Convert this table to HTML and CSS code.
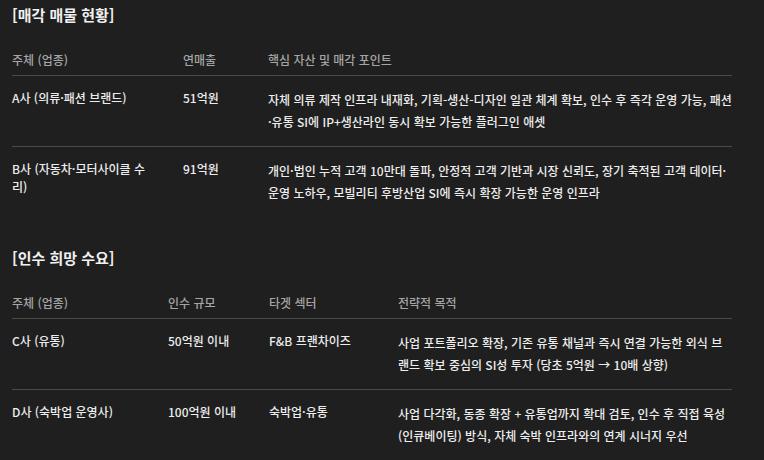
FILE: index.html
```html
<!DOCTYPE html>
<html lang="ko">
<head>
<meta charset="utf-8">
<link rel="stylesheet" href="styles.css">
</head>
<body>
<section class="section">
  <h2 class="title">[매각 매물 현황]</h2>
  <div class="table sell">
    <div class="row head">
      <div class="cell">주체 (업종)</div>
      <div class="cell">연매출</div>
      <div class="cell wide">핵심 자산 및 매각 포인트</div>
    </div>
    <div class="row">
      <div class="cell">A사 (의류·패션 브랜드)</div>
      <div class="cell">51억원</div>
      <div class="cell wide">자체 의류 제작 인프라 내재화, 기획-생산-디자인 일관 체계 확보, 인수 후 즉각 운영 가능, 패션·유통 SI에 IP+생산라인 동시 확보 가능한 플러그인 애셋</div>
    </div>
    <div class="row last">
      <div class="cell">B사 (자동차·모터사이클 수리)</div>
      <div class="cell">91억원</div>
      <div class="cell wide">개인·법인 누적 고객 10만대 돌파, 안정적 고객 기반과 시장 신뢰도, 장기 축적된 고객 데이터·운영 노하우, 모빌리티 후방산업 SI에 즉시 확장 가능한 운영 인프라</div>
    </div>
  </div>
</section>
<section class="section second">
  <h2 class="title">[인수 희망 수요]</h2>
  <div class="table buy">
    <div class="row head">
      <div class="cell">주체 (업종)</div>
      <div class="cell">인수 규모</div>
      <div class="cell">타겟 섹터</div>
      <div class="cell wide">전략적 목적</div>
    </div>
    <div class="row">
      <div class="cell">C사 (유통)</div>
      <div class="cell">50억원 이내</div>
      <div class="cell">F&amp;B 프랜차이즈</div>
      <div class="cell wide">사업 포트폴리오 확장, 기존 유통 채널과 즉시 연결 가능한 외식 브랜드 확보 중심의 SI성 투자 (당초 5억원 → 10배 상향)</div>
    </div>
    <div class="row last">
      <div class="cell">D사 (숙박업 운영사)</div>
      <div class="cell">100억원 이내</div>
      <div class="cell">숙박업·유통</div>
      <div class="cell wide">사업 다각화, 동종 확장 + 유통업까지 확대 검토, 인수 후 직접 육성 (인큐베이팅) 방식, 자체 숙박 인프라와의 연계 시너지 우선</div>
    </div>
  </div>
</section>
</body>
</html>
```

FILE: styles.css
```css
html, body {
  margin: 0;
  padding: 0;
  background: #1f1f1f;
}
body {
  padding: 5px 32px 0 12px;
  font-family: "Noto Sans CJK KR", "Noto Sans", sans-serif;
  color: #ededed;
  font-size: 12px;
  font-weight: 500;
}
.title {
  margin: 0 0 22px 0;
  font-size: 15px;
  line-height: 20px;
  font-weight: 700;
  color: #f0f0f0;
}
.second {
  margin-top: 31px;
}
.table {
  width: 720px;
}
.row {
  display: grid;
  padding: 13px 0 13px 0;
  border-bottom: 1px solid #4a4a4a;
}
.row.head {
  padding: 2px 0 4px 0;
  color: #a5a5a5;
}
.row.last {
  border-bottom: none;
}
.sell .row {
  grid-template-columns: 171px 85px 1fr;
}
.buy .row {
  grid-template-columns: 156px 101px 129px 1fr;
}
.cell {
  line-height: 18px;
  padding-right: 28px;
}
.cell.wide {
  line-height: 22px;
  padding-right: 0;
}
.head .cell {
  line-height: 22px;
}
```
